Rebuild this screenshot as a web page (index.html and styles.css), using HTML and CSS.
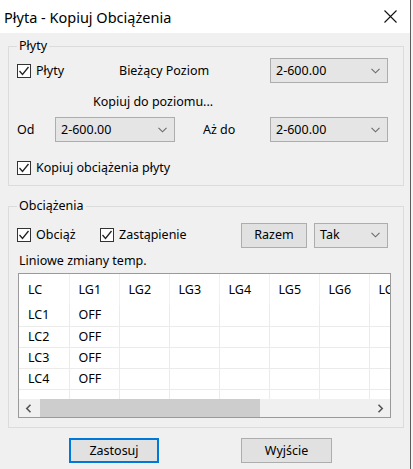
FILE: index.html
```html
<!DOCTYPE html>
<html lang="pl">
<head>
    <meta charset="UTF-8">
    <title>Płyta - Kopiuj Obciążenia</title>
    <link rel="stylesheet" href="styles.css">
</head>
<body>
    <div class="window">
        <div class="titlebar">
            <span class="title">Płyta - Kopiuj Obciążenia</span>
            <span class="close">
                <svg width="13" height="13" viewBox="0 0 13 13"><path d="M0.5 0.5 L12.5 12.5 M12.5 0.5 L0.5 12.5" stroke="#111" stroke-width="1.1" fill="none"/></svg>
            </span>
        </div>

        <div class="client">
            <!-- slabs group -->
            <fieldset class="group group-slabs">
                <legend>Płyty</legend>
                <div class="row row-current">
                    <label class="check">
                        <span class="box"><svg width="12" height="12" viewBox="0 0 12 12"><path d="M1.5 6 L4.5 9.5 L10.5 2" stroke="#222" stroke-width="1.3" fill="none"/></svg></span>
                        Płyty
                    </label>
                    <span>Bieżący Poziom</span>
                    <div class="combo">2-600.00<svg class="chev" width="9" height="6" viewBox="0 0 9 6"><path d="M0.5 0.8 L4.5 4.8 L8.5 0.8" stroke="#6a6a6a" stroke-width="1.1" fill="none"/></svg></div>
                </div>
                <div class="caption">Kopiuj do poziomu...</div>
                <div class="row row-range">
                    <span>Od</span>
                    <div class="combo">2-600.00<svg class="chev" width="9" height="6" viewBox="0 0 9 6"><path d="M0.5 0.8 L4.5 4.8 L8.5 0.8" stroke="#6a6a6a" stroke-width="1.1" fill="none"/></svg></div>
                    <span></span>
                    <span>Aż do</span>
                    <div class="combo">2-600.00<svg class="chev" width="9" height="6" viewBox="0 0 9 6"><path d="M0.5 0.8 L4.5 4.8 L8.5 0.8" stroke="#6a6a6a" stroke-width="1.1" fill="none"/></svg></div>
                </div>
                <label class="check check-copy">
                    <span class="box"><svg width="12" height="12" viewBox="0 0 12 12"><path d="M1.5 6 L4.5 9.5 L10.5 2" stroke="#222" stroke-width="1.3" fill="none"/></svg></span>
                    Kopiuj obciążenia płyty
                </label>
            </fieldset>

            <!-- loads group -->
            <fieldset class="group group-loads">
                <legend>Obciążenia</legend>
                <div class="row row-loads">
                    <label class="check">
                        <span class="box"><svg width="12" height="12" viewBox="0 0 12 12"><path d="M1.5 6 L4.5 9.5 L10.5 2" stroke="#222" stroke-width="1.3" fill="none"/></svg></span>
                        Obciąż
                    </label>
                    <label class="check">
                        <span class="box"><svg width="12" height="12" viewBox="0 0 12 12"><path d="M1.5 6 L4.5 9.5 L10.5 2" stroke="#222" stroke-width="1.3" fill="none"/></svg></span>
                        Zastąpienie
                    </label>
                    <button class="btn">Razem</button>
                    <span></span>
                    <div class="combo">Tak<svg class="chev" width="9" height="6" viewBox="0 0 9 6"><path d="M0.5 0.8 L4.5 4.8 L8.5 0.8" stroke="#6a6a6a" stroke-width="1.1" fill="none"/></svg></div>
                </div>
                <div class="grid-label">Liniowe zmiany temp.</div>

                <div class="grid">
                    <div class="grid-body">
                        <table>
                            <thead>
                                <tr><th>LC</th><th>LG1</th><th>LG2</th><th>LG3</th><th>LG4</th><th>LG5</th><th>LG6</th><th>LG7</th></tr>
                            </thead>
                            <tbody>
                                <tr><td>LC1</td><td>OFF</td><td></td><td></td><td></td><td></td><td></td><td></td></tr>
                                <tr><td>LC2</td><td>OFF</td><td></td><td></td><td></td><td></td><td></td><td></td></tr>
                                <tr><td>LC3</td><td>OFF</td><td></td><td></td><td></td><td></td><td></td><td></td></tr>
                                <tr><td>LC4</td><td>OFF</td><td></td><td></td><td></td><td></td><td></td><td></td></tr>
                                <tr><td></td><td></td><td></td><td></td><td></td><td></td><td></td><td></td></tr>
                            </tbody>
                        </table>
                    </div>
                    <div class="hscroll">
                        <svg class="arrow" width="7" height="9" viewBox="0 0 7 9"><path d="M5.5 0.8 L1.8 4.5 L5.5 8.2" stroke="#555" stroke-width="1.6" fill="none"/></svg>
                        <div class="track"><div class="thumb"></div></div>
                        <svg class="arrow" width="7" height="9" viewBox="0 0 7 9"><path d="M1.5 0.8 L5.2 4.5 L1.5 8.2" stroke="#555" stroke-width="1.6" fill="none"/></svg>
                    </div>
                </div>
            </fieldset>

            <div class="actions">
                <button class="btn btn-apply">Zastosuj</button>
                <button class="btn btn-exit">Wyjście</button>
            </div>
        </div>
    </div>
</body>
</html>
```

FILE: styles.css
```css
* {
    box-sizing: border-box;
}

body {
    margin: 0;
    background: #f3f3f3;
    font-family: "Noto Sans", "Segoe UI", sans-serif;
    font-size: 12.5px;
    line-height: 16px;
    color: #000;
}

.window {
    width: 411px;
    height: 469px;
    background: #f0f0f0;
    border-right: 1px solid #5c5c5c;
}

.titlebar {
    height: 33px;
    background: #fff;
    display: flex;
    align-items: center;
    justify-content: space-between;
    padding-left: 4px;
}

.title {
    font-size: 14.5px;
}

.close {
    width: 40px;
    display: flex;
    justify-content: center;
}

.client {
    padding: 5px 0 0 8px;
}

/* group boxes */
.group {
    margin: 0;
    width: 396px;
    min-width: 0;
    border: 1px solid #dcdcdc;
    padding: 4px 8px 9px;
}

.group legend {
    padding: 0 2px;
    line-height: 16px;
}

.group-loads {
    margin-top: 12px;
    padding-top: 8px;
}

.row {
    display: grid;
    align-items: center;
    height: 25px;
}

.row-current {
    grid-template-columns: 102px 151px 118px;
}

.row-range {
    margin-top: 7px;
    grid-template-columns: 38px 120px 28px 67px 118px;
}

.row-loads {
    height: 26px;
    grid-template-columns: 83px 141px 66px 7px 74px;
}

.caption {
    margin-top: 11px;
    padding-left: 76px;
}

/* checkboxes */
.check {
    display: flex;
    align-items: center;
    gap: 5px;
}

.check-copy {
    margin-top: 18px;
}

.box {
    width: 14px;
    height: 14px;
    border: 1px solid #333;
    background: #fff;
    display: flex;
    align-items: center;
    justify-content: center;
}

/* combo boxes */
.combo {
    height: 25px;
    border: 1px solid #adadad;
    background: #e5e5e5;
    display: flex;
    align-items: center;
    justify-content: space-between;
    padding: 0 7px 0 5px;
}

.btn {
    height: 25px;
    border: 1px solid #adadad;
    background: #e1e1e1;
    font: inherit;
    color: #000;
    padding: 0;
}

.grid-label {
    margin-top: 5px;
    padding-left: 2px;
}

/* load grid */
.grid {
    margin-top: 4px;
    margin-left: 1px;
    width: 373px;
    border: 1px solid #9a9a9a;
    background: #fff;
}

.grid-body {
    height: 125px;
    overflow: hidden;
}

table {
    border-collapse: collapse;
    table-layout: fixed;
    width: 400px;
}

th, td {
    width: 50px;
    padding: 0 0 0 9px;
    text-align: left;
    font-weight: normal;
    white-space: nowrap;
    overflow: hidden;
}

th {
    height: 31px;
    border-right: 1px solid #f0f0f0;
}

td {
    height: 21px;
    border-right: 1px solid #ebebeb;
    border-bottom: 1px solid #ebebeb;
}

.hscroll {
    height: 18px;
    display: flex;
    align-items: center;
    background: #f0f0f0;
}

.arrow {
    margin: 0 8px 0 6px;
}

.hscroll .arrow:last-child {
    margin: 0 6px 0 9px;
}

.track {
    flex: 1;
    height: 18px;
}

.thumb {
    width: 220px;
    height: 18px;
    background: #cdcdcd;
}

/* dialog buttons */
.actions {
    display: flex;
    gap: 82px;
    margin-top: 10px;
    padding-left: 61px;
}

.btn-apply {
    width: 90px;
    border: 2px solid #0078d7;
}

.btn-exit {
    width: 91px;
}
```
